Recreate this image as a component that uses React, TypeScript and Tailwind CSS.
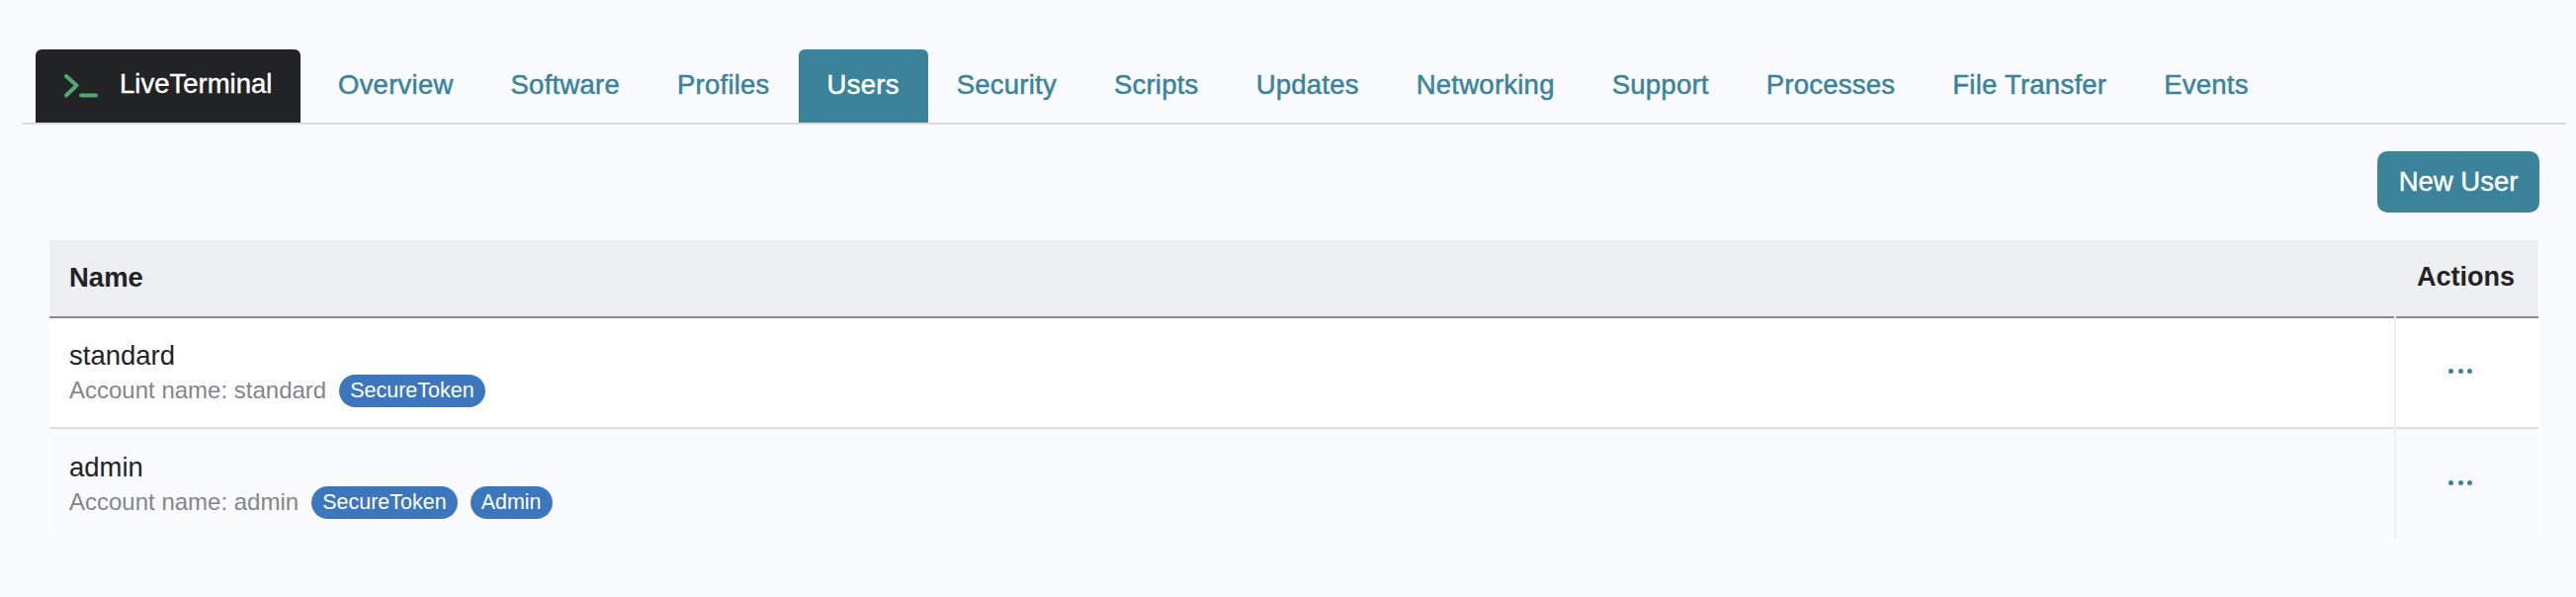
const tabs = [
  "Overview",
  "Software",
  "Profiles",
  "Users",
  "Security",
  "Scripts",
  "Updates",
  "Networking",
  "Support",
  "Processes",
  "File Transfer",
  "Events",
];

const users = [
  { name: "standard", badges: ["SecureToken"], alt: false },
  { name: "admin", badges: ["SecureToken", "Admin"], alt: true },
];

function TerminalIcon() {
  return (
    <svg width="34" height="24" viewBox="0 0 34 24" fill="none" className="mt-[3px] shrink-0">
      <path d="M2 2 L12.5 11.5 L2 21.5" stroke="#4fa871" strokeWidth="4" strokeLinecap="round" strokeLinejoin="round" />
      <path d="M17 21.5 H32" stroke="#4fa871" strokeWidth="4" strokeLinecap="round" />
    </svg>
  );
}

function Dots() {
  return (
    <div className="flex justify-center gap-[4.3px] pr-[14px] pb-[3px]">
      <span className="h-[5px] w-[5px] rounded-full bg-[#3a839b]" />
      <span className="h-[5px] w-[5px] rounded-full bg-[#3a839b]" />
      <span className="h-[5px] w-[5px] rounded-full bg-[#3a839b]" />
    </div>
  );
}

export default function App() {
  return (
    <div className="h-[604px] w-[2606px] bg-[#f9fafc] pt-[50px] font-['Liberation_Sans',sans-serif]">
      {/* Top tabs */}
      <nav className="ml-[22px] mr-[10px] flex h-[76px] items-stretch border-b-2 border-[#d9d9de] pl-[14px]">
        <div className="mr-[9px] flex w-[268px] items-center gap-[22px] rounded-t-md bg-[#222325] pb-[4px] pl-[29px] text-[27.5px] text-white [-webkit-text-stroke:0.4px]">
          <TerminalIcon />
          <span>LiveTerminal</span>
        </div>
        {tabs.map((tab) => (
          <a
            key={tab}
            className={
              tab === "Users"
                ? "flex items-center rounded-t-md bg-[#3a839b] px-[29px] pb-[3px] text-[27.5px] tracking-[0.24px] text-white [-webkit-text-stroke:0.5px]"
                : "flex items-center px-[29px] pb-[3px] text-[27.5px] tracking-[0.24px] text-[#3a839b] [-webkit-text-stroke:0.5px]"
            }
          >
            {tab}
          </a>
        ))}
      </nav>

      <div className="ml-[49px] mr-[37px]">
        <div className="flex justify-end pt-[27px] pb-[28px]">
          <button className="h-[62px] w-[164px] rounded-[10px] bg-[#3a839b] text-[27.5px] text-white [-webkit-text-stroke:0.4px]">
            New User
          </button>
        </div>

        {/* Users table */}
        <div className="rounded-b-lg border-x border-b border-white">
          <table className="w-full border-collapse text-[#212325]">
            <thead>
              <tr className="h-[78px] border-b-2 border-[#8a8b8f] bg-[#eeeff1] font-bold">
                <th className="pb-[2px] pl-[20px] text-left text-[27.5px]">Name</th>
                <th className="w-[145px] pr-[24px] pb-[2px] text-right text-[27px]">Actions</th>
              </tr>
            </thead>
            <tbody>
              {users.map((user) => (
                <tr
                  key={user.name}
                  className={user.alt ? "h-[113px] bg-[#f9fafc]" : "h-[112px] border-b-2 border-[#dcdde0] bg-white"}
                >
                  <td className="pt-[2px] pl-[20px]">
                    <div className="text-[27.5px] leading-[34px]">{user.name}</div>
                    <div className="flex items-center gap-[13px] text-[24px] text-[#84858a]">
                      <span>Account name: {user.name}</span>
                      <span className="flex gap-[13px]">
                        {user.badges.map((badge) => (
                          <span
                            key={badge}
                            className="flex h-[33px] items-center rounded-full bg-[#3c77bd] px-[11px] text-[21.5px] text-white"
                          >
                            {badge}
                          </span>
                        ))}
                      </span>
                    </div>
                  </td>
                  <td className="border-l-2 border-[#eeeff1]">
                    <Dots />
                  </td>
                </tr>
              ))}
            </tbody>
          </table>
        </div>
      </div>
    </div>
  );
}
